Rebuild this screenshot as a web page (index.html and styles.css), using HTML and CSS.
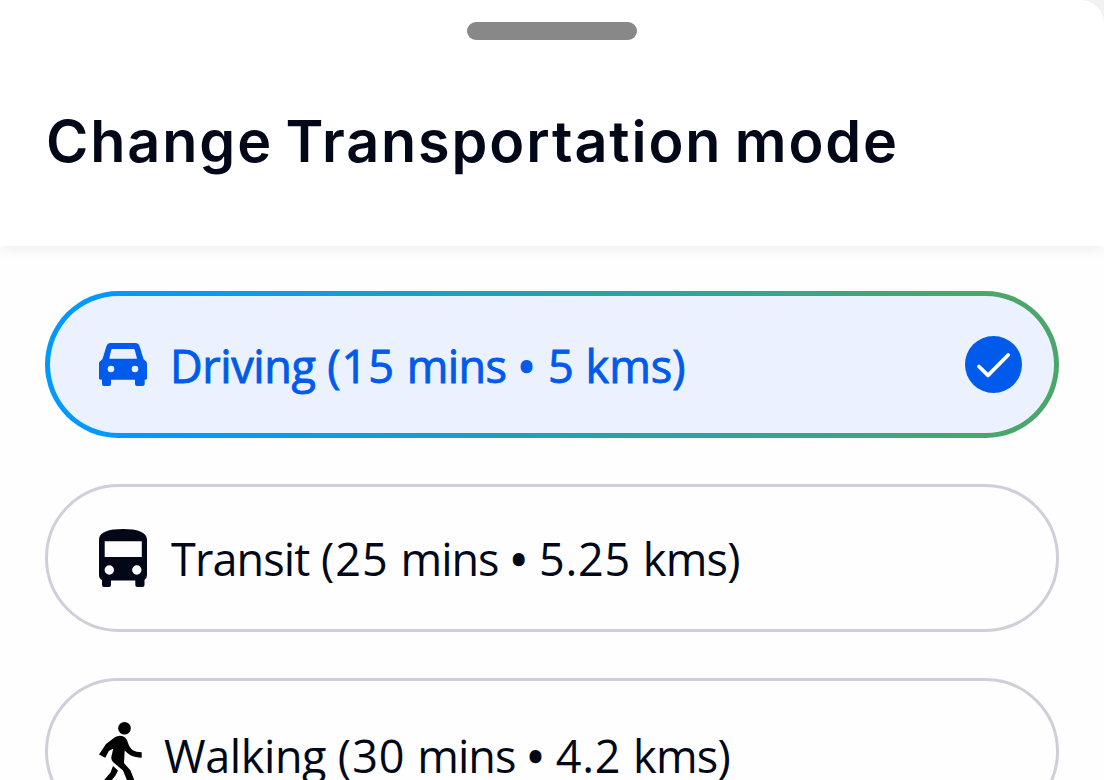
FILE: index.html
```html
<!DOCTYPE html>
<html lang="en">
<head>
<meta charset="utf-8">
<title>Change Transportation mode</title>
<link rel="stylesheet" href="styles.css">
</head>
<body>
<main class="sheet">
  <header class="header">
    <div class="handle"></div>
    <h1 class="title">Change Transportation mode</h1>
  </header>
  <div class="options">
    <div class="option selected">
      <svg class="icon car" width="48" height="43" viewBox="0 0 48 43" fill="currentColor">
        <path fill-rule="evenodd" d="M11.500 0h25q3 0 4 3L44.500 16Q48 18.500 48 21V35.500Q48 36.700 45.700 36.700V41q0 2-2 2H38q-2 0-2-2V36.700H12V41q0 2-2 2H5q-2 0-2-2V36.700Q0 36.700 0 35.500V21Q0 18.500 3.500 16L7.500 3q1-3 4-3ZM13.400 6Q12.500 6 12.200 7L10.200 15.800H38L35.800 7Q35.500 6 34.700 6ZM12 22.700a3.300 3.300 0 1 0 0 6.600a3.300 3.300 0 0 0 0-6.600ZM36 22.700a3.300 3.300 0 1 0 0 6.600a3.300 3.300 0 0 0 0-6.600Z"/>
      </svg>
      <span class="label driving"><span class="name">Driving</span> <span class="time">(15</span> <span class="unit">mins</span> <span class="dot">•</span> 5 kms)</span>
      <svg class="check" width="57" height="57" viewBox="0 0 57 57" fill="none">
        <circle cx="28.500" cy="28.500" r="28.500" fill="#005aeb"/>
        <path d="M14 30.500L23 39.300L43.200 19" stroke="#fff" stroke-width="3.800" stroke-linecap="round" stroke-linejoin="round"/>
      </svg>
    </div>
    <div class="option">
      <svg class="icon" width="48" height="58" viewBox="0 0 48 58" fill="currentColor">
        <path fill-rule="evenodd" d="M24 0C38 0 48 3 48 10.500V46Q48 49.500 45.500 51V56q0 2-2 2H38.300q-2 0-2-2V51.500H12V56q0 2-2 2H5q-2 0-2-2V51Q0 49.500 0 46V10.500C0 3 10 0 24 0ZM5.700 12.300V28H42.800V12.300ZM10.300 36.300a4.700 4.700 0 1 0 0 9.400a4.700 4.700 0 0 0 0-9.400ZM37.800 36.300a4.700 4.700 0 1 0 0 9.400a4.700 4.700 0 0 0 0-9.400Z"/>
      </svg>
      <span class="label transit"><span class="name">Transit</span> <span class="time">(25</span> <span class="unit">mins</span> <span class="dot">•</span> <span class="distance">5.25</span> <span class="length">kms)</span></span>
    </div>
    <div class="option">
      <svg class="icon walker" width="43" height="70" viewBox="0 0 43 70" fill="#000">
        <circle cx="25.500" cy="6.300" r="6.300"/>
        <path d="M0 32.500L6.300 35.700L9.800 29L14.300 26.500L12.300 35Q12 38 14 40L24 48.500L30 63L36 60L31.500 48.500L25 41L25.700 28.500C30 33 34 35.500 42.700 35.700V30.300C35 30 31.500 28 29 21Q27.500 14 21 13.700Q18 13.700 15.500 15.500L7 22Z"/>
        <path d="M14 44L11.500 50.500L3.500 60L8 64L16.500 53.500L19 48.500Z"/>
      </svg>
      <span class="label walking"><span class="name">Walking</span> <span class="time">(30</span> <span class="unit">mins</span> <span class="dot">•</span> <span class="distance">4.2</span> <span class="length">kms)</span></span>
    </div>
  </div>
</main>
</body>
</html>
```

FILE: styles.css
```css
* { box-sizing: border-box; }

body {
  margin: 0;
  height: 780px;
  overflow: hidden;
  background: #f1f1f1;
}

.sheet {
  height: 780px;
  overflow: hidden;
  background: #fefefe;
  border-top-right-radius: 24px;
}

.header {
  display: flex;
  flex-direction: column;
  height: 246px;
  padding: 22px 46px 0;
  background: #fff;
  box-shadow: 0 2px 14px rgba(0, 0, 0, 0.08);
}

.handle {
  width: 170px;
  height: 18px;
  border-radius: 9px;
  align-self: center;
  background: #888;
}

.title {
  margin: 66px 0 0;
  font: 600 57.500px/70px Inter, sans-serif;
  letter-spacing: 1.880px;
  word-spacing: -4px;
  color: #020817;
  white-space: nowrap;
}

.options {
  display: flex;
  flex-direction: column;
  gap: 46px;
  padding: 45px 45px 0;
}

.option {
  display: flex;
  align-items: center;
  flex: none;
  height: 147.400px;
  padding: 0 34px 0 51px;
  border: 3px solid #d0cfd9;
  border-radius: 74px;
  color: #020817;
}

.selected {
  border: 5px solid transparent;
  padding-left: 49px;
  padding-right: 32px;
  color: #005aeb;
  background: linear-gradient(#ebf1ff, #ebf1ff) padding-box,
    linear-gradient(75deg, #0099ff 10%, #4ba66b 90%) border-box;
}

.icon { flex: none; }

.walker { margin-top: 11px; }

.label {
  font: 400 45px/60px "Open Sans", sans-serif;
  white-space: nowrap;
}

.name { letter-spacing: -0.4px; }
.time { letter-spacing: 1px; }
.unit { letter-spacing: -1px; }
.distance { letter-spacing: 0.8px; }
.length { letter-spacing: -0.8px; }
.dot { -webkit-text-stroke: 2.500px currentColor; }

.driving {
  margin: 2px 0 0 23px;
  -webkit-text-stroke: 0.9px currentColor;
}

.driving .unit { letter-spacing: -0.6px; }
.driving .dot { letter-spacing: 1.500px; }

.transit { margin: 2px 0 0 24px; }
.transit .name { letter-spacing: -0.9px; }
.walking { margin: 10px 0 0 22px; }

.check { margin-left: auto; }
```
